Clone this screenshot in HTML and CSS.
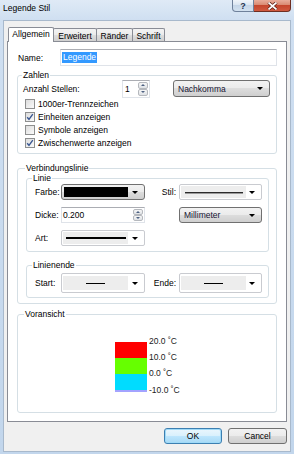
FILE: index.html
```html
<!DOCTYPE html>
<html lang="de">
<head>
<meta charset="utf-8">
<title>Legende Stil</title>
<link rel="stylesheet" href="styles.css">
</head>
<body>
<div class="window">
  <div class="titlebar">
    <span class="title">Legende Stil</span>
    <div class="caption">
      <span class="cap-btn help">?</span>
      <span class="cap-btn close"><svg width="11" height="8" viewBox="0 0 11 8"><path d="M1.5 0.5 L9.5 7.5 M9.5 0.5 L1.5 7.5" stroke="#5b1c12" stroke-width="3.2"/><path d="M1.5 0.5 L9.5 7.5 M9.5 0.5 L1.5 7.5" stroke="#fff" stroke-width="1.7"/></svg></span>
    </div>
  </div>
  <div class="client">
    <div class="tabs">
      <span class="tab active">Allgemein</span>
      <span class="tab t-erw">Erweitert</span>
      <span class="tab t-ran">Ränder</span>
      <span class="tab t-sch">Schrift</span>
    </div>
    <div class="panel">
      <div class="name-row">
        <span class="name-lbl">Name:</span>
        <div class="textbox name-input"><span class="sel">Legende</span></div>
      </div>

      <fieldset class="group zahlen">
        <legend>Zahlen</legend>
        <div class="stellen-row">
          <span class="stellen-lbl">Anzahl Stellen:</span>
          <div class="textbox spin spin-small">
            <span class="val">1</span>
            <span class="spin-btns"><span class="sb up"><i></i></span><span class="sb down"><i></i></span></span>
          </div>
          <div class="btn-combo nachkomma"><span>Nachkomma</span><i class="arrow"></i></div>
        </div>
        <div class="check"><span class="box"></span>1000er-Trennzeichen</div>
        <div class="check"><span class="box checked"><svg width="8" height="8" viewBox="0 0 8 8"><path d="M1.2 4.2 L3 6.4 L6.8 1.2" fill="none" stroke="#3a5791" stroke-width="1.4"/></svg></span>Einheiten anzeigen</div>
        <div class="check"><span class="box"></span>Symbole anzeigen</div>
        <div class="check"><span class="box checked"><svg width="8" height="8" viewBox="0 0 8 8"><path d="M1.2 4.2 L3 6.4 L6.8 1.2" fill="none" stroke="#3a5791" stroke-width="1.4"/></svg></span>Zwischenwerte anzeigen</div>
      </fieldset>

      <fieldset class="group verbindung">
        <legend>Verbindungslinie</legend>
        <fieldset class="group inner linie">
          <legend>Linie</legend>
          <div class="grid">
            <span class="lbl">Farbe:</span>
            <div class="btn-combo farbe"><span class="swatch"></span><i class="arrow"></i></div>
            <span class="lbl rlbl">Stil:</span>
            <div class="line-combo"><span class="well"><span class="ln thin"></span></span><i class="arrow"></i></div>

            <span class="lbl">Dicke:</span>
            <div class="textbox spin spin-dicke">
              <span class="val">0.200</span>
              <span class="spin-btns"><span class="sb up"><i></i></span><span class="sb down"><i></i></span></span>
            </div>
            <span></span>
            <div class="btn-combo"><span>Millimeter</span><i class="arrow"></i></div>

            <span class="lbl">Art:</span>
            <div class="line-combo"><span class="well"><span class="ln thick"></span></span><i class="arrow"></i></div>
          </div>
        </fieldset>
        <fieldset class="group inner linienende">
          <legend>Linienende</legend>
          <div class="grid end-grid">
            <span class="lbl">Start:</span>
            <div class="line-combo tall"><span class="well"><span class="ln short"></span></span><i class="arrow"></i></div>
            <span class="lbl rlbl">Ende:</span>
            <div class="line-combo tall"><span class="well"><span class="ln short"></span></span><i class="arrow"></i></div>
          </div>
        </fieldset>
      </fieldset>

      <fieldset class="group voransicht">
        <legend>Voransicht</legend>
        <div class="preview">
          <div class="bars">
            <span class="bar red"></span>
            <span class="bar green"></span>
            <span class="bar cyan"></span>
            <span class="bar base"></span>
          </div>
          <div class="scale">
            <span>20.0 ˚C</span>
            <span>10.0 ˚C</span>
            <span>0.0 ˚C</span>
            <span class="last">-10.0 ˚C</span>
          </div>
        </div>
      </fieldset>
    </div>
    <div class="buttons">
      <span class="btn default">OK</span>
      <span class="btn">Cancel</span>
    </div>
  </div>
</div>
</body>
</html>
```
FILE: styles.css
```css
* { box-sizing: border-box; }
html, body { margin: 0; padding: 0; }
body {
  width: 294px; height: 454px; overflow: hidden;
  font-family: "Liberation Sans", Arial, sans-serif;
  font-size: 8.5px; line-height: 10px; color: #000;
}
.window {
  width: 294px; height: 454px;
  display: flex; flex-direction: column;
  background: linear-gradient(to bottom, #dfeaf6 0, #cfdff1 20px, #c2d6ec 100%);
}
.titlebar {
  flex: none; height: 20px;
  display: flex; justify-content: space-between; align-items: flex-start;
  padding-left: 3px;
}
.title { margin-top: 3px; color: #000; }
.caption { display: flex; margin-right: 3px; }
.cap-btn {
  height: 12px;
  display: flex; align-items: center; justify-content: center;
  border: 1px solid #6f819b; border-top: none;
}
.help {
  width: 22px; border-radius: 0 0 0 4px;
  background: linear-gradient(#f1f5fa, #dae5f1 45%, #c6d6e8 50%, #d4e2f0);
  font-weight: bold; font-size: 9px; color: #1f3150;
}
.close {
  width: 37px; border-left: none; border-radius: 0 0 4px 0;
  border-color: #6e2e22;
  background: linear-gradient(#e9ad9b, #d98a72 45%, #c5462d 50%, #d0593f);
}
.client {
  flex: 1;
  margin: 0 3px 2px 3px;
  background: #f0f0f0;
  border: 1px solid #a8b9cc;
  padding: 6px 3px 0 3px;
  display: flex; flex-direction: column;
}
/* tabs */
.tabs { display: flex; align-items: flex-end; padding-left: 1px; height: 14px; flex: none; }
.tab {
  height: 13px; padding-top: 1px;
  display: flex; justify-content: center; align-items: center;
  border: 1px solid #898c95; border-bottom: none;
  border-radius: 2px 2px 0 0;
  background: linear-gradient(#f3f3f3, #ebebeb 50%, #dedede 50%, #d0d0d0);
  margin-left: -1px;
}
.tab.active {
  height: 15px; width: 46px; margin-left: 0; margin-bottom: -1px;
  background: #fff; position: relative; z-index: 1; padding-top: 0;
  padding-bottom: 2px;
}
.t-erw { width: 44px; }
.t-ran { width: 37px; }
.t-sch { width: 33px; }
.panel {
  flex: none; height: 381px;
  background: #fff;
  border: 1px solid #898c95;
  padding: 7px 9px 0 9px;
  display: flex; flex-direction: column;
}
/* name */
.name-row { display: flex; height: 17px; align-items: center; }
.name-lbl { width: 43px; padding-left: 1px; }
.textbox {
  background: #fff;
  border: 1px solid #dfe3e9; border-top-color: #abadb3;
  display: flex; align-items: center;
}
.name-input { flex: 1; height: 17px; padding-left: 1px; }
.sel { background: #3399ff; color: #fff; padding: 0 1px; line-height: 11px; }
/* groups */
fieldset.group {
  margin: 0; min-width: 0;
  border: 1px solid #d5dfe5; border-radius: 3px;
}
fieldset.group > legend { padding: 0 1px; line-height: 10px; margin-left: -1px; }
.zahlen { margin-top: 4px !important; padding: 0 6px 4px 5px; }
.stellen-row { display: flex; align-items: center; height: 17px; }
.stellen-lbl { width: 99px; }
.spin { position: relative; justify-content: space-between; }
.spin .val { padding-left: 2px; }
.spin-small { width: 28px; height: 18px; }
.spin-btns { display: flex; flex-direction: column; height: 100%; padding: 1px 1px 1px 0; gap: 0; }
.sb {
  width: 10px; flex: 1;
  border: 1px solid #b5b8bd; border-radius: 2px;
  background: linear-gradient(#f6f6f6, #dfe2e6);
  display: flex; align-items: center; justify-content: center;
}
.sb i { width: 0; height: 0; border-left: 2px solid transparent; border-right: 2px solid transparent; }
.sb.up i { border-bottom: 2px solid #4d6182; }
.sb.down i { border-top: 2px solid #4d6182; }
.btn-combo {
  height: 17px;
  border: 1px solid #707070; border-radius: 3px;
  background: linear-gradient(#f2f2f2, #ebebeb 50%, #dddddd 50%, #cfcfcf);
  display: flex; align-items: center;
  padding: 0 6px 0 4px;
  color: #141432;
}
.nachkomma { width: 97px; margin-left: 23px; }
.arrow {
  margin-left: auto;
  width: 0; height: 0;
  border-left: 3px solid transparent; border-right: 3px solid transparent;
  border-top: 3px solid #000;
}
.check { display: flex; align-items: center; height: 13px; padding-left: 2px; }
.box {
  width: 10px; height: 10px; margin-right: 3px;
  border: 1px solid #8e8f8f;
  background: linear-gradient(135deg, #dcdcdc, #fbfbfb);
  display: flex; align-items: center; justify-content: center;
}
.verbindung { margin-top: 9px !important; padding: 0 7px 5px 8px; }
.inner > legend { margin-left: -3px !important; }
.linie { padding: 1px 6px 5px 8px; }
.grid {
  display: grid;
  grid-template-columns: 26px 84px 1fr 83px;
  grid-auto-rows: 16px;
  row-gap: 7px;
  align-items: center;
}
.grid > * { height: 100%; }
.lbl { display: flex; align-items: center; }
.rlbl { justify-content: flex-end; padding-right: 3px; }
.farbe { padding: 0 6px 0 2px; height: 16px; }
.swatch { width: 64px; height: 10px; background: #000; }
.grid .btn-combo { height: 16px; }
.line-combo {
  border: 1px solid #c9cbd0; border-radius: 2px;
  background: #fff;
  display: flex; align-items: center;
  padding: 1px 6px 1px 1px;
}
.well {
  width: 65px; height: 100%;
  background: #ededed;
  display: flex; align-items: center; justify-content: center;
}
.ln { display: block; background: #000; }
.ln.thin { width: 58px; height: 1px; background: #2b2b2b; box-shadow: 0 1px 0 #9a9a9a; }
.ln.thick { width: 60px; height: 2px; }
.ln.short { width: 19px; height: 1px; }
.spin-dicke { height: 16px; }
.spin-dicke .val { padding-left: 1px; }
.linienende { margin-top: 8px !important; padding: 3px 6px 4px 8px; }
.end-grid { grid-auto-rows: 20px; }
.line-combo.tall { padding: 2px 6px 2px 1px; }
.voransicht { margin-top: 5px !important; padding: 17px 0 11px 7px; }
.preview { display: flex; padding-left: 90px; }
.bars { display: flex; flex-direction: column; margin-top: 6px; width: 32px; }
.bar { display: block; height: 16px; }
.red { background: #ff0000; }
.green { background: #66ff00; }
.cyan { background: #00dcff; }
.base { height: 2px; background: #a3a3ff; }
.scale { display: flex; flex-direction: column; margin-left: 2px; color: #222; }
.scale span { height: 16px; }
.scale .last { margin-top: 1px; }
/* buttons */
.buttons { display: flex; justify-content: flex-end; gap: 6px; margin-top: 6px; padding-right: 0; flex: none; }
.btn {
  height: 16px; width: 59px;
  border: 1px solid #707070; border-radius: 3px;
  background: linear-gradient(#f2f2f2, #ebebeb 50%, #dddddd 50%, #cfcfcf);
  display: flex; align-items: center; justify-content: center;
}
.btn.default {
  width: 58px;
  border-color: #3c7fb1;
  background: linear-gradient(#eaf6fd, #d9f0fc 50%, #bee6fd 50%, #a7d9f5);
  box-shadow: inset 0 0 0 1px #9fdaf8;
}
```
